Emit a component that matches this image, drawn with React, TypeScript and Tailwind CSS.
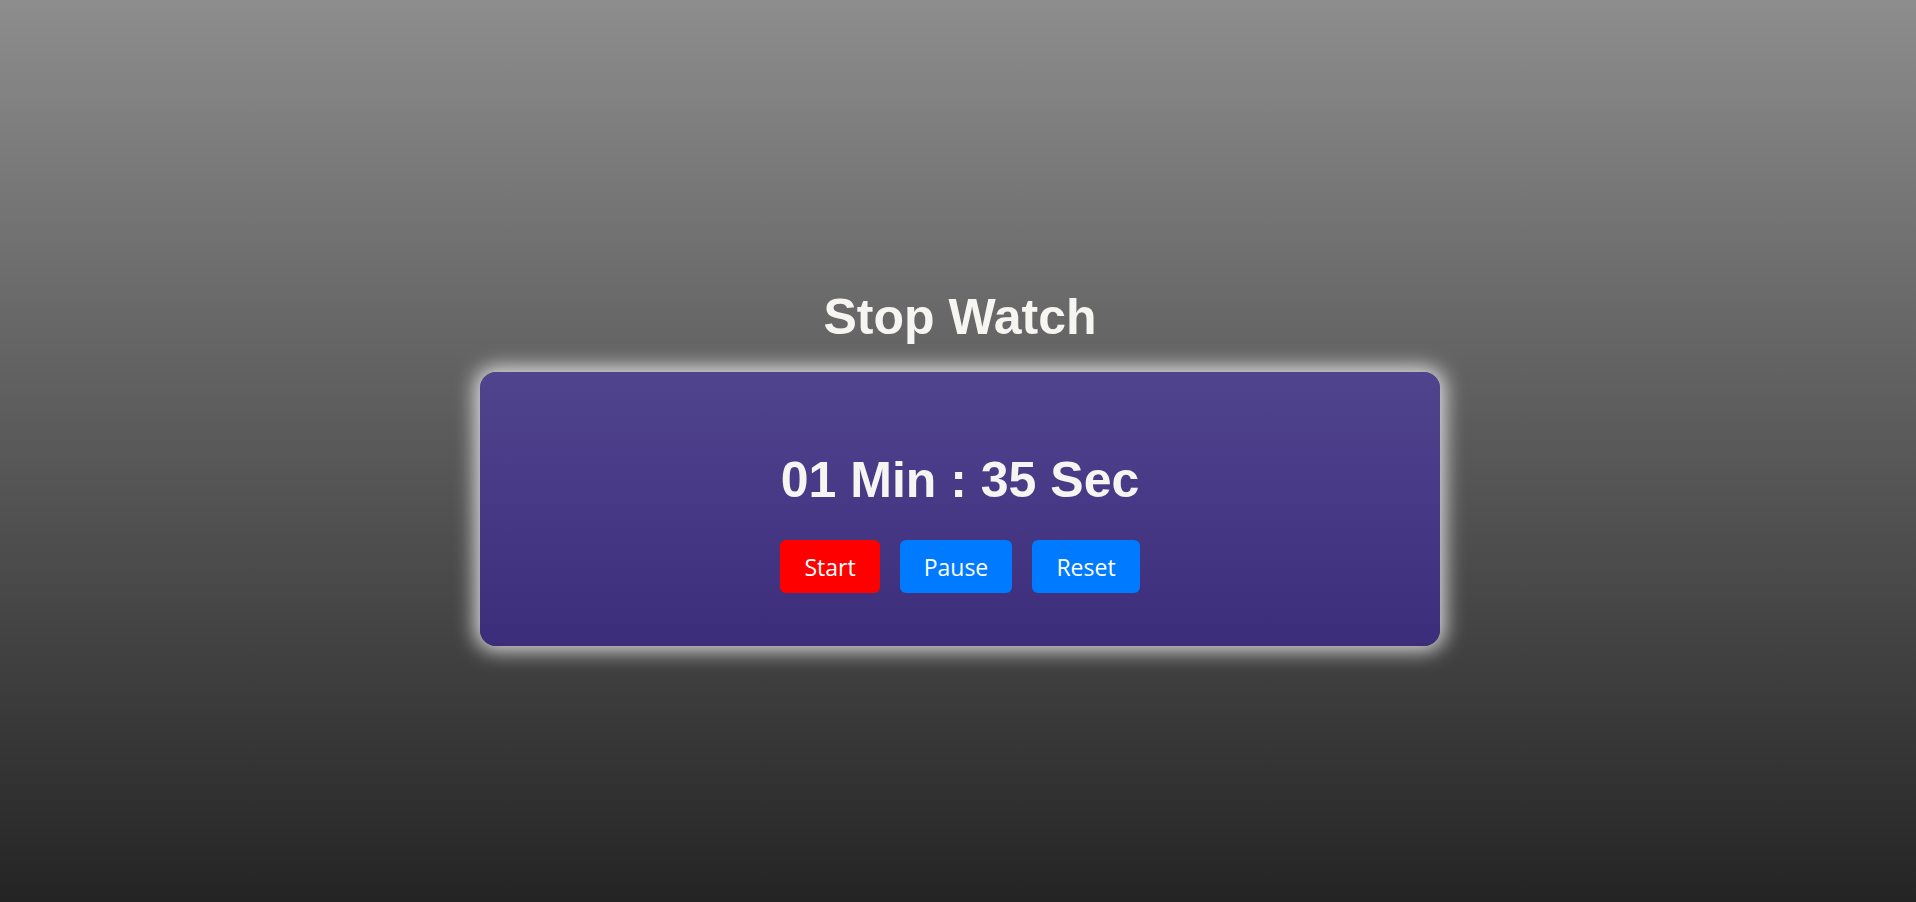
const buttons = [
  { label: "Start", className: "w-[100px] bg-[#ff0000]" },
  { label: "Pause", className: "w-[112px] bg-[#007bff]" },
  { label: "Reset", className: "w-[108px] bg-[#007bff]" },
];

export default function App() {
  return (
    <div className="flex min-h-screen flex-col items-center bg-[linear-gradient(to_bottom,#8d8d8d,#242424)] pl-[4px] pt-[289px] font-['Liberation_Sans',Arial,sans-serif] text-[#f7f5f2]">
      <h1 className="text-[50px] font-bold leading-[57px]">Stop Watch</h1>

      {/* Timer card with a soft white glow */}
      <div className="mt-[26px] flex h-[274px] w-[960px] flex-col items-center rounded-2xl bg-[linear-gradient(to_bottom,#51448f,#3c2d7a)] pt-[80px] shadow-[0_0_20px_5px_rgba(255,255,255,0.8)]">
        <p className="text-[50px] font-bold leading-[57px]">01 Min : 35 Sec</p>
        <div className="mt-[31px] flex gap-[20px]">
          {buttons.map((b) => (
            <button
              key={b.label}
              className={`h-[53px] rounded-md pt-[2px] font-['Open_Sans',sans-serif] text-[23px] text-white ${b.className}`}
            >
              {b.label}
            </button>
          ))}
        </div>
      </div>
    </div>
  );
}
